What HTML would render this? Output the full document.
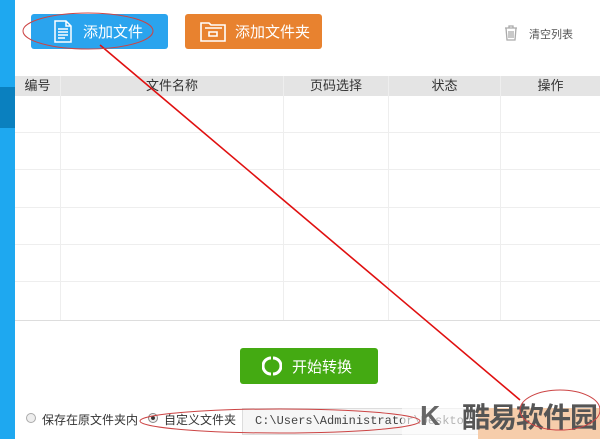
<!DOCTYPE html><html><head><meta charset="utf-8"><style>
body{margin:0;width:600px;height:439px;position:relative;overflow:hidden;background:#fff;font-family:"Liberation Sans","Noto Sans CJK SC",sans-serif;}
.a{position:absolute}
.btn{position:absolute;color:#fff;font-size:15px;border-radius:3px;display:flex;align-items:center}
.hd{position:absolute;top:76px;height:20px;background:#e4e4e4;font-size:13px;color:#333;text-align:center;line-height:20px}
.vl{position:absolute;top:76px;height:244px;width:1px;background:#eee}
.hl{position:absolute;left:15px;width:585px;height:1px;background:#eee}
</style></head><body>
<div class="a" style="left:0;top:0;width:15px;height:439px;background:#1ea8f0"></div>
<div class="a" style="left:0;top:87px;width:15px;height:41px;background:#0a80bf"></div>
<div class="btn" style="left:31px;top:14px;width:137px;height:35px;background:#2aa4ee">
<svg class="a" style="left:23px;top:6px" width="18" height="23" viewBox="0 0 18 23" fill="none" stroke="#fff" stroke-width="1.5"><path d="M1 1h11l5 5v16H1z M12 1v5h5 M4 9h10 M4 12h10 M4 15h10 M4 18h7"/></svg>
<span class="a" style="left:52px;top:7px">添加文件</span></div>
<div class="btn" style="left:185px;top:14px;width:137px;height:35px;background:#e8822f">
<svg class="a" style="left:15px;top:6px" width="26" height="22" viewBox="0 0 26 22" fill="none" stroke="#fff" stroke-width="1.6"><path d="M1 3h8l2 2h14v16H1z M5 8h17 M9 12h8v4H9z"/></svg>
<span class="a" style="left:50px;top:7px">添加文件夹</span></div>
<svg class="a" style="left:504px;top:25px" width="14" height="16" viewBox="0 0 14 16" fill="none" stroke="#aaa" stroke-width="1.3"><path d="M1 3h12 M5 3V1h4v2 M2 3l1 12h8l1-12 M5 6v7 M7 6v7 M9 6v7"/></svg>
<div class="a" style="left:529px;top:26px;font-size:11px;color:#555">清空列表</div>
<div class="hd" style="left:15px;width:45px">编号</div>
<div class="hd" style="left:61px;width:222px">文件名称</div>
<div class="hd" style="left:284px;width:104px">页码选择</div>
<div class="hd" style="left:389px;width:111px">状态</div>
<div class="hd" style="left:501px;width:99px">操作</div>
<div class="vl" style="left:60px"></div><div class="vl" style="left:283px"></div><div class="vl" style="left:388px"></div><div class="vl" style="left:500px"></div>
<div class="hl" style="top:132px"></div><div class="hl" style="top:169px"></div><div class="hl" style="top:207px"></div><div class="hl" style="top:244px"></div><div class="hl" style="top:281px"></div>
<div class="hl" style="top:320px;background:#ddd"></div>
<div class="btn" style="left:240px;top:348px;width:138px;height:36px;background:#44aa12">
<svg class="a" style="left:22px;top:8px" width="20" height="20" viewBox="0 0 20 20" fill="none" stroke="#fff" stroke-width="3"><path d="M9 2A8 8 0 0 0 9 18 M11 2A8 8 0 0 1 11 18"/></svg>
<span class="a" style="left:52px;top:8px">开始转换</span></div>
<div class="a" style="left:26px;top:413px;width:8px;height:8px;border:1px solid #aaa;border-radius:50%;background:#eee"></div>
<div class="a" style="left:42px;top:411px;font-size:12px;color:#333">保存在原文件夹内</div>
<div class="a" style="left:148px;top:413px;width:8px;height:8px;border:1px solid #888;border-radius:50%;background:radial-gradient(#333 30%,#eee 40%)"></div>
<div class="a" style="left:164px;top:411px;font-size:12px;color:#333">自定义文件夹</div>
<div class="a" style="left:242px;top:408px;width:230px;height:25px;border:1px solid #ddd;background:#f6f6f6;font-family:'Liberation Mono',monospace;font-size:12px;color:#444;line-height:25px;padding-left:12px;overflow:hidden;white-space:nowrap">C:\Users\Administrator\Desktop</div>
<div class="a" style="left:478px;top:408px;width:122px;height:31px;background:#e8822f"></div>
<div class="a" style="left:402px;top:395px;width:198px;height:44px;background:rgba(255,255,255,.6)"></div>
<div class="a" style="left:462px;top:396px;font-size:28px;font-weight:bold;color:#555;letter-spacing:-1px">酷易软件园</div>
<div class="a" style="left:420px;top:400px;font-size:28px;font-weight:bold;color:#666">K</div>
<svg class="a" style="left:0;top:0" width="600" height="439"><path d="M100 45L520 400" stroke="#e01010" stroke-width="1.6"/>
<ellipse cx="88" cy="31" rx="65" ry="18" fill="none" stroke="#c44" stroke-width="1"/>
<ellipse cx="280" cy="421" rx="140" ry="12" fill="none" stroke="#c44" stroke-width="1"/>
<ellipse cx="560" cy="410" rx="40" ry="20" fill="none" stroke="#c44" stroke-width="1"/></svg>
</body></html>
